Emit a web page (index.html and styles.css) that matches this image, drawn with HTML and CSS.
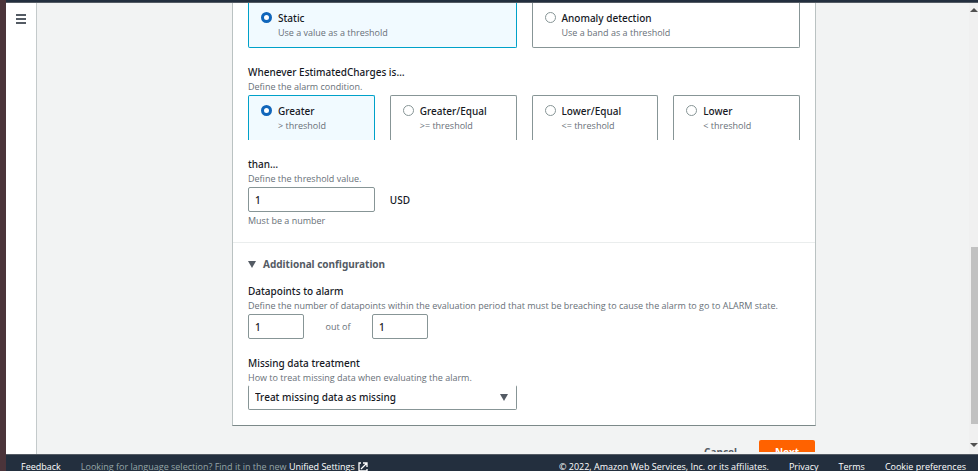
FILE: index.html
```html
<!DOCTYPE html>
<html lang="en">
<head>
<meta charset="utf-8">
<title>Create alarm - conditions</title>
<link rel="stylesheet" href="styles.css">
</head>
<body>
<div class="window">
  <header class="topbar"></header>
  <div class="workspace">
    <nav class="sidebar" aria-label="Navigation">
      <button class="menu" type="button" aria-label="Open navigation">
        <svg width="10" height="10" viewBox="0 0 10 10"><path d="M0 1h10M0 5h10M0 9h10" stroke="#545b64" stroke-width="2"/></svg>
      </button>
    </nav>
    <main class="content">
      <form class="form">
        <section class="panel">
          <div class="section">
            <div class="tiles tiles-cut-top" role="radiogroup" aria-label="Threshold type">
              <label class="tile selected"><input type="radio" name="type" checked><span class="tile-text"><span class="title">Static</span><span class="hint">Use a value as a threshold</span></span></label>
              <label class="tile"><input type="radio" name="type"><span class="tile-text"><span class="title">Anomaly detection</span><span class="hint">Use a band as a threshold</span></span></label>
            </div>
            <div class="field">
              <span class="title" id="cond">Whenever EstimatedCharges is…</span>
              <span class="hint">Define the alarm condition.</span>
              <div class="tiles tiles-cut-bottom" role="radiogroup" aria-labelledby="cond">
                <label class="tile selected"><input type="radio" name="op" checked><span class="tile-text"><span class="title">Greater</span><span class="hint">&gt; threshold</span></span></label>
                <label class="tile"><input type="radio" name="op"><span class="tile-text"><span class="title">Greater/Equal</span><span class="hint">&gt;= threshold</span></span></label>
                <label class="tile"><input type="radio" name="op"><span class="tile-text"><span class="title">Lower/Equal</span><span class="hint">&lt;= threshold</span></span></label>
                <label class="tile"><input type="radio" name="op"><span class="tile-text"><span class="title">Lower</span><span class="hint">&lt; threshold</span></span></label>
              </div>
            </div>
            <div class="field">
              <label class="title" for="threshold">than…</label>
              <span class="hint">Define the threshold value.</span>
              <div class="quarters">
                <input class="box" id="threshold" type="text" value="1">
                <span class="title">USD</span>
              </div>
              <span class="hint constraint">Must be a number</span>
            </div>
          </div>
          <details class="section extra" open>
            <summary><svg width="8" height="7" viewBox="0 0 8 7"><path d="M0 0h8L4 7z" fill="#545b64"/></svg>Additional configuration</summary>
            <div class="field">
              <label class="title" for="points">Datapoints to alarm</label>
              <span class="hint">Define the number of datapoints within the evaluation period that must be breaching to cause the alarm to go to ALARM state.</span>
              <div class="points">
                <input class="box" id="points" type="text" value="1">
                <label class="hint" for="periods">out of</label>
                <input class="box" id="periods" type="text" value="1">
              </div>
            </div>
            <div class="field">
              <label class="title" for="missing">Missing data treatment</label>
              <span class="hint">How to treat missing data when evaluating the alarm.</span>
              <div class="select-wrap">
                <select class="box" id="missing"><option>Treat missing data as missing</option></select>
                <svg class="caret" width="8" height="7" viewBox="0 0 8 7"><path d="M0 0h8L4 7z" fill="#545b64"/></svg>
              </div>
            </div>
          </details>
        </section>
        <div class="actions">
          <button class="cancel" type="button">Cancel</button>
          <button class="next" type="submit">Next</button>
        </div>
      </form>
    </main>
    <div class="scrollbar" aria-hidden="true">
      <svg width="8" height="4" viewBox="0 0 8 4"><path d="M0 4L4 0l4 4z" fill="#505050"/></svg>
      <div class="track"><div class="thumb"></div></div>
      <svg width="8" height="4" viewBox="0 0 8 4"><path d="M0 0h8L4 4z" fill="#505050"/></svg>
    </div>
  </div>
  <footer class="footer">
    <a href="#">Feedback</a>
    <span class="language">Looking for language selection? Find it in the new <a href="#">Unified Settings<svg width="10" height="10" viewBox="0 0 10 10"><path d="M3 1H1v8h8V7M5 1h4v4M9 1L3 7" fill="none" stroke="#fff" stroke-width="1.3"/></svg></a></span>
    <span class="legal">© 2022, Amazon Web Services, Inc. or its affiliates.</span>
    <a href="#">Privacy</a>
    <a href="#">Terms</a>
    <a href="#">Cookie preferences</a>
  </footer>
</div>
</body>
</html>
```
FILE: styles.css
```css
* { box-sizing: border-box; }

body {
  margin: 0;
  background: #4b343a;
  color: #16191f;
  font: 500 10px/15px "Noto Sans", sans-serif;
}

button, input, select { font: inherit; color: inherit; margin: 0; }

.window {
  display: flex;
  flex-direction: column;
  height: 100vh;
  margin-left: 6px;
  overflow: hidden;
}

.topbar {
  flex: none;
  height: 3px;
  background: #232f3e;
  border-bottom: 1px solid #545b64;
}

.workspace { display: flex; flex: 1; min-height: 0; background: #f2f3f3; }

.sidebar {
  flex: none;
  width: 31px;
  padding: 11px 10px;
  background: #fff;
  border-right: 1px solid #c4cacb;
}

.menu { display: block; padding: 0; border: 0; background: none; }
.menu svg { display: block; }

.content {
  flex: 1;
  display: grid;
  grid-template-columns: 195fr 584fr 153fr;
  margin-bottom: 2px;
  overflow: hidden;
}

.form { grid-column: 2; min-width: 0; }

.panel {
  background: #fff;
  border: solid #bac2c2;
  border-width: 0 1px 1px;
  border-bottom-color: #7c8989;
}

.section { padding: 0 15px 15px; }

.title { display: block; line-height: 16px; }
.hint {
  display: block;
  color: #687078;
  font-family: "Open Sans", sans-serif;
  font-size: 9px;
  font-weight: 400;
  line-height: 13px;
}

.tiles, .quarters { display: grid; grid-template-columns: repeat(4, 1fr); gap: 15px; }
.tiles-cut-top { grid-template-columns: repeat(2, 1fr); }

.tile {
  display: flex;
  gap: 6px;
  height: 45px;
  padding: 7px 12px;
  border: 1px solid #879596;
  border-radius: 2px;
}
.tile.selected { border-color: #00a1c9; background: #f1faff; }
.tiles-cut-top .tile { border-top: 0; border-radius: 0 0 2px 2px; }
.tiles-cut-bottom .tile { border-bottom: 0; border-radius: 2px 2px 0 0; }

.tile input {
  appearance: none;
  flex: none;
  width: 11px;
  height: 11px;
  margin-top: 2px;
  border: 1px solid #879596;
  border-radius: 50%;
  background: #fff;
}
.tile input:checked { border: 3px solid #1166bb; }

.field { margin-top: 16px; }
.field .tiles, .quarters, .points { margin-top: 2px; }

.box {
  width: 100%;
  height: 25px;
  padding: 0 6px;
  border: 1px solid #879596;
  border-radius: 2px;
  background: #fff;
}

.quarters { align-items: center; }
.constraint { margin-top: 2px; }

.extra { border-top: 1px solid #eaeded; padding: 14px 15px 15px; }
.extra summary {
  display: flex;
  align-items: center;
  gap: 7px;
  color: #545b64;
  font-weight: 700;
  list-style: none;
}
.extra summary + .field { margin-top: 11px; }

.points {
  display: grid;
  grid-template-columns: 56px 68px 56px;
  align-items: center;
}
.points .hint { text-align: center; }

.select-wrap { position: relative; width: calc(50% - 7px); margin-top: 1px; }
.select-wrap .box { display: block; appearance: none; border-top-color: transparent; }
.caret { position: absolute; right: 9px; top: 9px; }

.actions {
  display: flex;
  justify-content: flex-end;
  gap: 22px;
  margin-top: 14px;
  padding-right: 1px;
}
.actions button {
  height: 25px;
  padding: 0;
  border: 0;
  border-radius: 2px;
  background: none;
  font-weight: 700;
}
.actions .cancel { color: #545b64; }
.actions .next { width: 56px; background: #ff6200; color: #fff; }

.scrollbar {
  flex: none;
  display: flex;
  flex-direction: column;
  align-items: flex-end;
  width: 9px;
  padding: 5px 0 7px;
  background: #f0f0f0;
}
.scrollbar svg { flex: none; }
.track {
  flex: 1;
  display: flex;
  flex-direction: column;
  justify-content: flex-end;
  width: 7px;
  padding-bottom: 19px;
}
.thumb { height: 43%; background: #c1c1c1; }

.footer {
  flex: none;
  display: flex;
  align-items: center;
  gap: 20px;
  height: 17px;
  padding: 7px 12px 0 15px;
  background: #232f3e;
  border-top: 1px solid #545b64;
  color: #fff;
  font-family: "Open Sans", sans-serif;
  font-size: 9px;
  line-height: 13px;
  white-space: nowrap;
}
.footer a { color: #fff; text-decoration: none; }
.language { flex: 1; color: #95a5a6; font-weight: 400; }
.language a { font-weight: 500; }
.language svg { margin-left: 3px; vertical-align: -2px; }
```
